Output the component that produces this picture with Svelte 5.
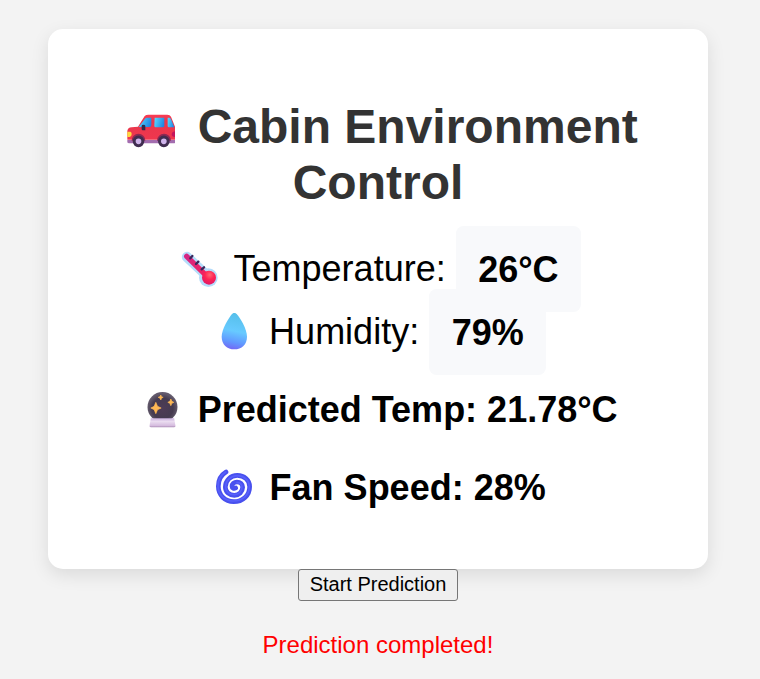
<script>
  const temperature = 26;
  const humidity = 79;
  const predicted = 21.78;
  const fanSpeed = 28;
  let status = $state('Prediction completed!');
</script>

<main>
  <section class="card">
    <h1>
      <svg class="car" viewBox="6 36 198 114" aria-hidden="true">
        <defs>
          <linearGradient id="glass" x1="0" y1="0.2" x2="1" y2="0.5">
            <stop offset="0" stop-color="#55d9ff" /><stop offset="1" stop-color="#2185e2" />
          </linearGradient>
          <linearGradient id="paint" x1="0" y1="0" x2="0" y2="1">
            <stop offset="0" stop-color="#fa3d55" /><stop offset="0.25" stop-color="#e8364c" /><stop offset="1" stop-color="#f0374e" />
          </linearGradient>
        </defs>
        <path d="M34 120H177V128Q177 130 173 130H40Q34 130 34 126Z" fill="#a36daf" />
        <path d="M34 93Q35 83 47 82L66 80L86 48Q90 44 97 44H154Q162 44 165 50L177 80V119H34Z" fill="url(#paint)" />
        <path d="M68 81L87 56Q89 53 93 53H106V75Q106 81 100 81Z" fill="url(#glass)" />
        <path d="M116 53H145V77Q145 82 140 82H119Q115 82 115 78Z" fill="url(#glass)" />
        <path d="M155 53H161Q164 54 166 60L175 82H159Q155 82 155 78Z" fill="url(#glass)" />
        <path d="M34 95H43Q47 96 47 102Q47 110 41 111H34Z" fill="#ffd83f" />
        <path d="M177 94V111Q166 110 167 102Q168 95 177 94Z" fill="#c3155d" />
        <path d="M77 78Q77 74 82 74Q88 74 88 78V91H80Q77 91 77 87Z" fill="#302b4c" />
        <path d="M47 122A20 20 0 0 1 88 122ZM123 122A20 20 0 0 1 165 122Z" fill="#8d2953" />
        <g fill="#cfb4eb" stroke="#402d50" stroke-width="9">
          <circle cx="67.5" cy="124" r="13" /><circle cx="143.5" cy="124" r="13" />
        </g>
      </svg>
      Cabin Environment Control
    </h1>
    <p class="reading">
      <svg viewBox="-3 18 148 120" aria-hidden="true">
        <defs>
          <linearGradient id="tube" gradientUnits="userSpaceOnUse" x1="32" y1="38" x2="84" y2="90">
            <stop offset="0" stop-color="#d52583" /><stop offset="1" stop-color="#f02262" />
          </linearGradient>
          <radialGradient id="bulb" cx="0.55" cy="0.3" r="0.75">
            <stop offset="0" stop-color="#ff6474" /><stop offset="0.45" stop-color="#ff2454" /><stop offset="1" stop-color="#dc1669" />
          </radialGradient>
        </defs>
        <path d="M33 39L90 92" fill="none" stroke="#b5dcfb" stroke-width="31" stroke-linecap="round" />
        <circle cx="97" cy="101" r="28" fill="#b5dcfb" />
        <path d="M32 37L84 88" fill="none" stroke="url(#tube)" stroke-width="16" stroke-linecap="round" />
        <path d="M49 36L43 43M67 53L60 60M84 70L77 76" stroke="#39285c" stroke-width="7" stroke-linecap="round" />
        <circle cx="99" cy="101" r="21" fill="url(#bulb)" />
      </svg>
      Temperature: <span class="value">{temperature}°C</span>
    </p>
    <p class="reading">
      <svg viewBox="-6 21 148 120" aria-hidden="true">
        <defs>
          <linearGradient id="water" x1="0.6" y1="0" x2="0.45" y2="1">
            <stop offset="0" stop-color="#55bfe9" /><stop offset="0.5" stop-color="#67caff" /><stop offset="0.8" stop-color="#6199ff" /><stop offset="1" stop-color="#7269f5" />
          </linearGradient>
        </defs>
        <path d="M60 24Q67 17 74 24C83 34 105 68 105 92C105 115 89 130 67 130S29 115 29 92C29 69 50 36 60 24Z" fill="url(#water)" />
      </svg>
      Humidity: <span class="value">{humidity}%</span>
    </p>
    <p class="result">
      <svg viewBox="-4.5 21 148 120" aria-hidden="true">
        <defs>
          <radialGradient id="orb" cx="0.5" cy="0.55" r="0.5">
            <stop offset="0" stop-color="#4e3c56" /><stop offset="0.7" stop-color="#453b50" /><stop offset="1" stop-color="#62596b" />
          </radialGradient>
          <linearGradient id="stand" x1="0" y1="0" x2="0" y2="1">
            <stop offset="0" stop-color="#cbb2df" /><stop offset="0.35" stop-color="#eadcf0" /><stop offset="0.8" stop-color="#d6bddf" /><stop offset="1" stop-color="#a98ab3" />
          </linearGradient>
        </defs>
        <circle cx="69" cy="69" r="45" fill="url(#orb)" />
        <path d="M34 103H104L108 126Q108 130 103 130H35Q30 130 30 126Z" fill="url(#stand)" />
        <g fill="#ffb955" stroke="#ffb955" stroke-width="2" stroke-linejoin="round">
          <path d="M49 55L54 67L65 72L54 77L49 89L44 77L34 72L44 67Z" />
          <path d="M64 33L66 38L71 40L66 42L64 48L61 42L56 40L61 38Z" />
          <path d="M94 45L97 52L103 55L97 58L94 65L91 58L85 55L91 52Z" />
        </g>
      </svg>
      Predicted Temp: {predicted}°C
    </p>
    <p class="result">
      <svg viewBox="3 21 148 120" aria-hidden="true">
        <g fill="none" stroke-linecap="round">
          <path d="M51 30C36 39 28 55 28 73C28 99 48 119 74 119C101 119 122 100 122 74C122 54 105 40 85 40C64 40 49 56 49 75C49 90 61 100 76 100C90 100 101 89 101 76C101 66 94 60 84 60C75 60 69 66 69 73C69 78 74 81 80 78" stroke="#4850ee" stroke-width="14" />
          <path d="M50 30C35 39 27 55 27 73C27 98 48 117 74 117C100 117 121 99 121 74C121 55 105 41 85 41C65 41 50 56 50 75C50 89 61 98 76 98C89 98 99 88 99 76C99 67 93 62 84 62" stroke="#5860fa" stroke-width="5" />
        </g>
      </svg>
      Fan Speed: {fanSpeed}%
    </p>
  </section>
  <button type="button" onclick={() => (status = 'Prediction completed!')}>Start Prediction</button>
  <p class="status">{status}</p>
</main>

<style>
  :global(body) {
    background: #f3f3f3;
  }
  main {
    box-sizing: border-box;
    width: 756px;
    height: 679px;
    padding-top: 29px;
    display: flex;
    flex-direction: column;
    align-items: center;
    font-family: "Liberation Sans", Arial, sans-serif;
    color: #000;
  }
  .card {
    box-sizing: border-box;
    width: 660px;
    height: 540px;
    padding: 70px 45px 0;
    border-radius: 15px;
    background: #fff;
    box-shadow: 0 6px 18px rgba(0, 0, 0, 0.1);
    text-align: center;
  }
  h1 {
    margin: 0 0 26px;
    font-size: 48px;
    line-height: 56px;
    color: #333;
  }
  p {
    margin: 0;
    font-size: 36px;
    line-height: 63px;
    white-space: nowrap;
  }
  svg {
    width: 49.33px;
    height: 40px;
    vertical-align: -9px;
  }
  .car {
    width: 66px;
    height: 38px;
    vertical-align: -7px;
  }
  .value {
    padding: 22.5px;
    border-radius: 7.5px;
    background: #f8f9fb;
    font-weight: bold;
  }
  .result {
    margin-top: 15px;
    font-weight: bold;
  }
  button {
    box-sizing: border-box;
    width: 160px;
    height: 32px;
    padding: 0 0 2px;
    border: 1px solid #767676;
    border-radius: 3px;
    background: #efefef;
    color: #000;
    font: 20px "Liberation Sans", Arial, sans-serif;
  }
  .status {
    margin-top: 30px;
    font-size: 24px;
    line-height: 28px;
    color: #f00;
  }
</style>
